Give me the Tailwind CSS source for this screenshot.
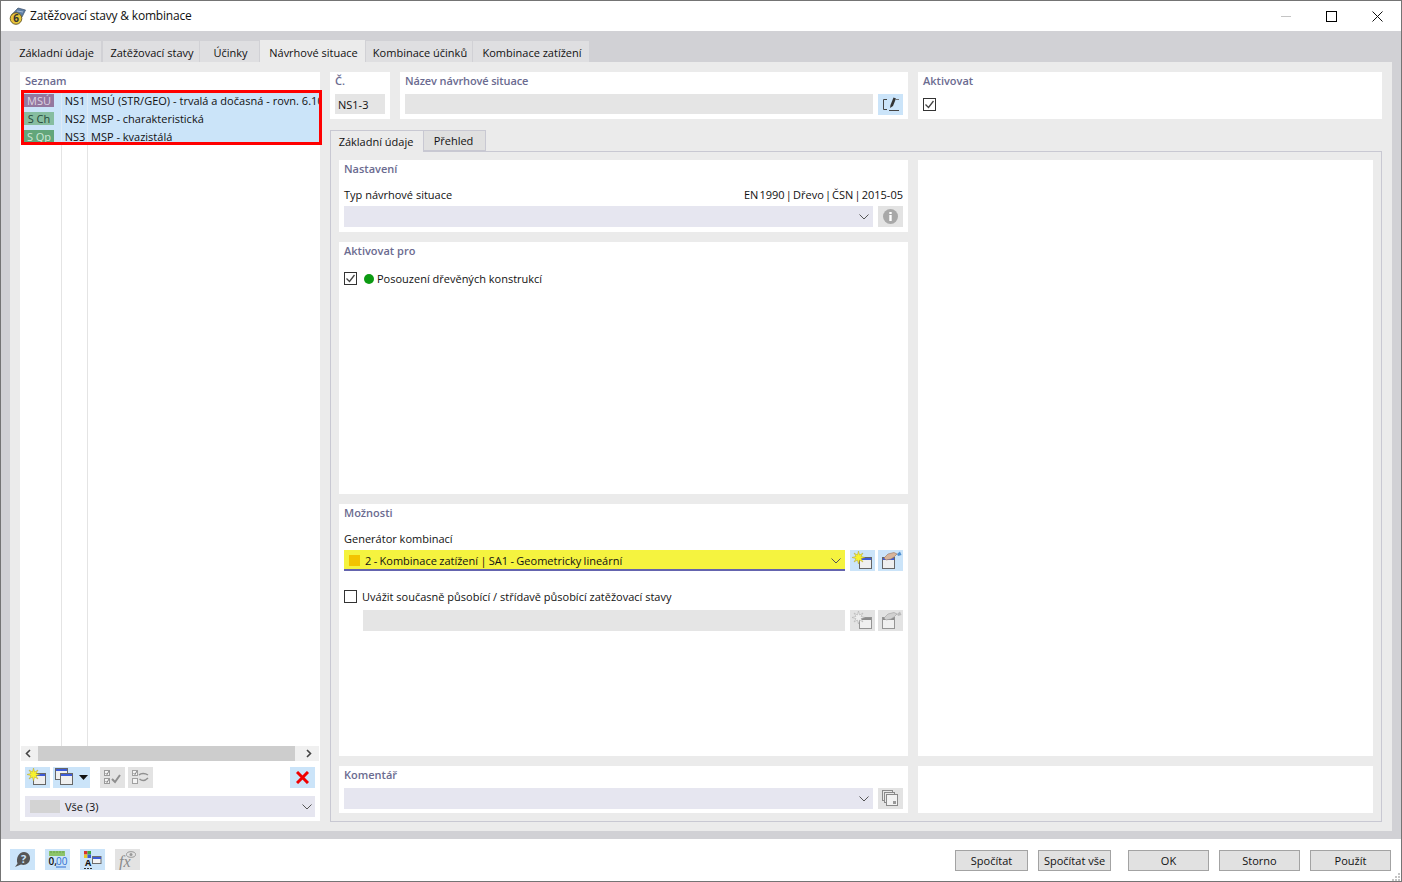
<!DOCTYPE html>
<html lang="cs">
<head>
    <meta charset="UTF-8">
    <title>Zatěžovací stavy &amp; kombinace</title>
    <script src="https://cdn.jsdelivr.net/npm/@tailwindcss/browser@4"></script>
</head>
<body class="bg-white">
    <!-- shared icons -->
    <svg class="hidden" width="0" height="0">
        <defs>
            <symbol id="win" viewBox="0 0 13 12">
                <rect x="0.5" y="0.5" width="12" height="11" fill="#efefef" stroke="#666"/>
                <rect x="1" y="1" width="11" height="2" fill="#3d5bd8"/>
            </symbol>
            <symbol id="win-off" viewBox="0 0 13 12">
                <rect x="0.5" y="0.5" width="12" height="11" fill="#f0f0f0" stroke="#959595"/>
                <rect x="1" y="1" width="11" height="2" fill="#8c8c8c"/>
            </symbol>
            <symbol id="burst" viewBox="0 0 13 13">
                <path d="M6.500 0L7.600 4L11 2L9 5.400L13 6.500L9 7.600L11 11L7.600 9L6.500 13L5.400 9L2 11L4 7.600L0 6.500L4 5.400L2 2L5.400 4z" fill="#f7f22e" stroke="#b9a52a" stroke-width="0.500"/>
            </symbol>
            <symbol id="burst-off" viewBox="0 0 13 13">
                <path d="M6.500 0L7.600 4L11 2L9 5.400L13 6.500L9 7.600L11 11L7.600 9L6.500 13L5.400 9L2 11L4 7.600L0 6.500L4 5.400L2 2L5.400 4z" fill="#eee" stroke="#a8a8a8" stroke-width="0.500"/>
            </symbol>
            <symbol id="chev" viewBox="0 0 10 6">
                <path d="M0.5 0.5L5 5L9.500 0.500" fill="none" stroke="#555" stroke-width="1"/>
            </symbol>
            <symbol id="tick" viewBox="0 0 14 14">
                <rect x="0.5" y="0.5" width="12" height="12" fill="#fff" stroke="#333"/>
                <path d="M2.500 6.500L5.500 9.500L10.500 3" fill="none" stroke="#444" stroke-width="1.300"/>
            </symbol>
        </defs>
    </svg>

    <div class="w-[1402px] h-[882px] flex flex-col border border-[#747474] overflow-hidden font-['Open_Sans','Noto_Sans',sans-serif] text-[11px] text-[#111] leading-none">
        <!-- title bar -->
        <div class="h-[30px] shrink-0 flex items-center bg-white">
            <svg class="ml-[8px] w-[17px] h-[18px]" viewBox="0 0 17 18">
                <path d="M2.500 8L9 1L16.500 3L13 10z" fill="#5f7fa5" stroke="#3c4f68" stroke-width="0.700"/>
                <path d="M8 4L14 5" stroke="#a9bdd6" stroke-width="1"/>
                <circle cx="7" cy="11.500" r="5.800" fill="#e8c53a" stroke="#5e5020" stroke-width="0.900"/>
                <text x="7" y="15" text-anchor="middle" font-size="10" font-weight="700" fill="#333" font-family="Open Sans">6</text>
            </svg>
            <span class="ml-[4px] text-[12px] tracking-[-0.2px]">Zatěžovací stavy &amp; kombinace</span>
            <div class="ml-auto flex items-center">
                <div class="w-[10px] h-px bg-[#c4c4c4] mr-[35px]"></div>
                <div class="w-[11px] h-[11px] border border-black mr-[35px]"></div>
                <svg class="w-[11px] h-[11px] mr-[18px]" viewBox="0 0 11 11"><path d="M0.5 0.5L10.500 10.500M10.500 0.500L0.500 10.500" stroke="#111" stroke-width="1"/></svg>
            </div>
        </div>

        <!-- tabs + main -->
        <div class="flex-1 min-h-0 bg-[#d1d1d5] px-[9px] pt-[9px] pb-[8px] flex flex-col">
            <div class="h-[22px] shrink-0 flex items-stretch gap-px">
                <div class="w-[91px] mt-px pt-px pl-[2px] flex items-center justify-center bg-[#dfdfe1]">Základní údaje</div>
                <div class="w-[96px] mt-px ml-px pt-px pl-[2px] flex items-center justify-center bg-[#dfdfe1]">Zatěžovací stavy</div>
                <div class="w-[59px] mt-px pt-px pl-[2px] flex items-center justify-center bg-[#dfdfe1]">Účinky</div>
                <div class="w-[105px] pt-[2px] pl-[2px] flex items-center justify-center bg-[#ebebeb]">Návrhové situace</div>
                <div class="w-[106px] mt-px pt-px pl-[2px] flex items-center justify-center bg-[#dfdfe1]">Kombinace účinků</div>
                <div class="w-[116px] mt-px pt-px pl-[2px] flex items-center justify-center bg-[#dfdfe1]">Kombinace zatížení</div>
            </div>

            <div class="flex-1 min-h-0 bg-[#ebebeb] p-[10px] flex gap-[10px]">
                <!-- list -->
                <div class="w-[300px] h-[749px] shrink-0 bg-white flex flex-col">
                    <div class="h-[19px] shrink-0 pl-[5px] pt-[3px] font-semibold text-[#6b6b90]">Seznam</div>
                    <div class="relative flex-1 min-h-0 flex flex-col">
                        <div class="absolute left-px -right-[2px] -top-px h-[55px] border-[3px] border-[#ff0000] z-10"></div>
                        <div class="h-[18px] shrink-0 ml-[2px] flex items-center bg-[#cbe4f9] overflow-hidden whitespace-nowrap">
                            <div class="w-[40px] h-full shrink-0 border-r border-[#dfeaf5] flex items-center pl-[2px]"><span class="w-[30px] h-[13px] flex items-center justify-center bg-[#94789f] text-[#ddd5e4]">MSÚ</span></div>
                            <div class="w-[26px] h-full shrink-0 border-r border-[#dfeaf5] pl-px flex items-center justify-center">NS1</div>
                            <div class="pl-[3px] tracking-[0.02px]">MSÚ (STR/GEO) - trvalá a dočasná - rovn. 6.10</div>
                        </div>
                        <div class="h-[18px] shrink-0 ml-[2px] flex items-center bg-[#cbe4f9] overflow-hidden whitespace-nowrap">
                            <div class="w-[40px] h-full shrink-0 border-r border-[#dfeaf5] flex items-center pl-[2px]"><span class="w-[30px] h-[13px] flex items-center justify-center bg-[#86bda0] text-[#24483a]">S Ch</span></div>
                            <div class="w-[26px] h-full shrink-0 border-r border-[#dfeaf5] pl-px flex items-center justify-center">NS2</div>
                            <div class="pl-[3px]">MSP - charakteristická</div>
                        </div>
                        <div class="h-[18px] shrink-0 ml-[2px] flex items-center bg-[#cbe4f9] overflow-hidden whitespace-nowrap">
                            <div class="w-[40px] h-full shrink-0 border-r border-[#dfeaf5] flex items-center pl-[2px]"><span class="w-[30px] h-[13px] flex items-center justify-center bg-[#62a67a] text-[#cfe8d8]">S Qp</span></div>
                            <div class="w-[26px] h-full shrink-0 border-r border-[#dfeaf5] pl-px flex items-center justify-center">NS3</div>
                            <div class="pl-[3px]">MSP - kvazistálá</div>
                        </div>
                        <div class="flex-1 ml-[2px] flex">
                            <div class="w-[40px] border-r border-[#e4e4e4]"></div>
                            <div class="w-[26px] border-r border-[#e4e4e4]"></div>
                        </div>
                    </div>
                    <!-- scrollbar -->
                    <div class="h-[15px] shrink-0 mx-px flex items-center bg-[#f0f0f0]">
                        <svg class="w-[17px] h-[9px]" viewBox="0 0 17 9"><path d="M9 1L5.500 4.500L9 8" fill="none" stroke="#444" stroke-width="1.600"/></svg>
                        <div class="w-[257px] h-full bg-[#cdcdcd]"></div>
                        <svg class="w-[23px] h-[9px]" viewBox="0 0 23 9"><path d="M12 1L15.500 4.500L12 8" fill="none" stroke="#444" stroke-width="1.600"/></svg>
                    </div>
                    <!-- toolbar -->
                    <div class="h-[21px] mt-[6px] mx-[5px] shrink-0 flex">
                        <div class="relative w-[25px] h-[21px] bg-[#cbe4f9]">
                            <svg class="absolute left-[8px] top-[6px] w-[13px] h-[12px]"><use href="#win"/></svg>
                            <svg class="absolute left-[2px] top-px w-[13px] h-[13px]"><use href="#burst"/></svg>
                        </div>
                        <div class="relative w-[37px] h-[21px] ml-[3px] bg-[#cbe4f9]">
                            <svg class="absolute left-[2px] top-px w-[13px] h-[12px]"><use href="#win"/></svg>
                            <svg class="absolute left-[7px] top-[6px] w-[13px] h-[12px]"><use href="#win"/></svg>
                            <svg class="absolute left-[26px] top-[8px] w-[9px] h-[5px]" viewBox="0 0 9 5"><path d="M0 0H9L4.500 5z" fill="#111"/></svg>
                        </div>
                        <div class="w-[25px] h-[21px] ml-[10px] bg-[#e3e3e3]">
                            <svg class="w-[25px] h-[21px]" viewBox="0 0 25 21"><g fill="#f4f4f4" stroke="#9a9a9a"><rect x="4.500" y="3.500" width="5" height="5"/><rect x="4.500" y="11.500" width="5" height="5"/></g><path d="M5.500 6L7 7.500L9 4M5.500 14L7 15.500L9 12" fill="none" stroke="#808080"/><path d="M12 12L15 15L20 8" fill="none" stroke="#8e8e8e" stroke-width="2"/></svg>
                        </div>
                        <div class="w-[25px] h-[21px] ml-[3px] bg-[#e3e3e3]">
                            <svg class="w-[25px] h-[21px]" viewBox="0 0 25 21"><g fill="#f4f4f4" stroke="#a0a0a0"><rect x="4.500" y="3.500" width="5" height="5"/><rect x="4.500" y="11.500" width="5" height="5"/></g><path d="M5.500 6L7 7.500L9 4" fill="none" stroke="#808080"/><path d="M11 8C13 6 17 6 20 8M20 11C17 14 14 14 11.500 12" fill="none" stroke="#909090" stroke-width="1.500"/></svg>
                        </div>
                        <div class="ml-auto w-[25px] h-[21px] bg-[#cbe4f9] flex items-center justify-center">
                            <svg class="w-[13px] h-[13px]" viewBox="0 0 13 13"><path d="M1 1L12 12M12 1L1 12" stroke="#f00000" stroke-width="3"/></svg>
                        </div>
                    </div>
                    <!-- filter -->
                    <div class="h-[21px] mt-[8px] mx-[5px] mb-[4px] shrink-0 flex items-center bg-[#e6e6f0]">
                        <div class="w-[30px] h-[13px] ml-[5px] bg-[#d3d3d3]"></div>
                        <span class="ml-[5px]">Vše (3)</span>
                        <svg class="ml-auto mr-[3px] w-[10px] h-[6px]"><use href="#chev"/></svg>
                    </div>
                </div>

                <!-- right side -->
                <div class="w-[1052px] h-[750px] shrink-0 flex flex-col">
                    <div class="h-[47px] shrink-0 flex gap-[10px]">
                        <div class="w-[60px] bg-white px-[5px] pt-[3px]">
                            <div class="h-[19px] font-semibold text-[#6b6b90]">Č.</div>
                            <div class="h-[20px] bg-[#e5e5e5] flex items-center pl-[3px]">NS1-3</div>
                        </div>
                        <div class="w-[508px] bg-white px-[5px] pt-[3px]">
                            <div class="h-[19px] font-semibold text-[#6b6b90] tracking-[-0.13px]">Název návrhové situace</div>
                            <div class="flex gap-[5px]">
                                <div class="flex-1 h-[20px] bg-[#e5e5e5]"></div>
                                <div class="w-[25px] h-[21px] bg-[#cbe4f9]">
                                    <svg class="w-[25px] h-[21px]" viewBox="0 0 25 21"><path d="M9 5.500H5.500V15.500H9M11 16.500H21" fill="none" stroke="#444" stroke-width="1"/><path d="M12 14L12.500 11L15.500 3.500L18 4.500L15 12z" fill="#333"/><path d="M18 5.500H21" stroke="#777"/></svg>
                                </div>
                            </div>
                        </div>
                        <div class="w-[464px] bg-white px-[5px] pt-[3px]">
                            <div class="h-[19px] font-semibold text-[#6b6b90]">Aktivovat</div>
                            <svg class="mt-[4px] w-[14px] h-[14px]"><use href="#tick"/></svg>
                        </div>
                    </div>

                    <!-- inner tabs -->
                    <div class="h-[22px] mt-[11px] shrink-0 flex relative z-10">
                        <div class="w-[94px] h-[22px] pr-[2px] flex items-center justify-center bg-[#ebebeb] border border-b-0 border-[#c8c8d2]">Základní údaje</div>
                        <div class="w-[62px] h-[21px] pr-[2px] flex items-center justify-center bg-[#e0e0e0] border border-l-0 border-[#c8c8d2]">Přehled</div>
                    </div>

                    <div class="h-[671px] -mt-px shrink-0 border border-[#c8c8d2] p-[8px] grid grid-cols-[569px_455px] grid-rows-[72px_252px_252px_47px] gap-[10px]">
                        <!-- Nastavení -->
                        <div class="bg-white px-[5px] flex flex-col">
                            <div class="h-[18px] pt-[3px] font-semibold text-[#6b6b90]">Nastavení</div>
                            <div class="h-[28px] flex items-end justify-between pb-[6px]">
                                <span>Typ návrhové situace</span>
                                <span class="[word-spacing:-1.7px]">EN 1990 | Dřevo | ČSN | 2015-05</span>
                            </div>
                            <div class="flex gap-[5px]">
                                <div class="flex-1 h-[21px] bg-[#e6e6f0] flex items-center justify-end pr-[4px]"><svg class="w-[10px] h-[6px]"><use href="#chev"/></svg></div>
                                <div class="w-[25px] h-[21px] bg-[#e3e3e3] flex items-center justify-center">
                                    <svg class="w-[15px] h-[15px]" viewBox="0 0 15 15"><circle cx="7.500" cy="7.500" r="7.500" fill="#a8a8a8"/><rect x="6.300" y="6" width="2.400" height="6" fill="#fff"/><rect x="6.300" y="3" width="2.400" height="2" fill="#fff"/></svg>
                                </div>
                            </div>
                        </div>
                        <div class="row-span-3 bg-white"></div>

                        <!-- Aktivovat pro -->
                        <div class="bg-white px-[5px]">
                            <div class="h-[18px] pt-[3px] font-semibold text-[#6b6b90]">Aktivovat pro</div>
                            <div class="mt-[11px] flex items-center">
                                <svg class="mt-px w-[14px] h-[14px]"><use href="#tick"/></svg>
                                <span class="ml-[6px] w-[10px] h-[10px] rounded-full bg-[#0c9a12]"></span>
                                <span class="ml-[3px]">Posouzení dřevěných konstrukcí</span>
                            </div>
                        </div>

                        <!-- Možnosti -->
                        <div class="bg-white px-[5px]">
                            <div class="h-[18px] pt-[3px] font-semibold text-[#6b6b90]">Možnosti</div>
                            <div class="h-[28px] flex items-end pb-[6px]">Generátor kombinací</div>
                            <div class="flex">
                                <div class="w-[501px] h-[21px] pt-[2px] bg-[#f5f33f] border-b-2 border-[#6464ae] flex items-center">
                                    <span class="ml-[5px] w-[11px] h-[11px] bg-[#f3c300]"></span>
                                    <span class="ml-[5px] [word-spacing:-0.5px]">2 - Kombinace zatížení | SA1 - Geometricky lineární</span>
                                    <svg class="ml-auto mr-[4px] w-[10px] h-[6px]"><use href="#chev"/></svg>
                                </div>
                                <div class="relative w-[25px] h-[21px] ml-[5px] bg-[#cbe4f9]">
                                    <svg class="absolute left-[9px] top-[7px] w-[13px] h-[12px]"><use href="#win"/></svg>
                                    <svg class="absolute left-[2px] top-px w-[13px] h-[13px]"><use href="#burst"/></svg>
                                </div>
                                <div class="relative w-[25px] h-[21px] ml-[3px] bg-[#cbe4f9]">
                                    <svg class="absolute left-[4px] top-[7px] w-[13px] h-[12px]"><use href="#win"/></svg>
                                    <svg class="absolute left-[5px] top-px w-[19px] h-[10px]" viewBox="0 0 19 10"><path d="M1 7L5 3L11 1.500L14 3L11 6L8 8L3 9z" fill="#d8b49a" stroke="#9a7560" stroke-width="0.600"/><path d="M14 3L17 0.500L18.500 4L15 5z" fill="#4f8fd0"/></svg>
                                </div>
                            </div>
                            <div class="mt-[19px] flex items-center">
                                <span class="w-[13px] h-[13px] border border-[#333] bg-white"></span>
                                <span class="ml-[5px]">Uvážit současně působící / střídavě působící zatěžovací stavy</span>
                            </div>
                            <div class="mt-[7px] flex pl-[19px]">
                                <div class="w-[482px] h-[21px] bg-[#e5e5e5]"></div>
                                <div class="relative w-[25px] h-[21px] ml-[5px] bg-[#e3e3e3]">
                                    <svg class="absolute left-[9px] top-[7px] w-[13px] h-[12px]"><use href="#win-off"/></svg>
                                    <svg class="absolute left-[2px] top-px w-[13px] h-[13px]"><use href="#burst-off"/></svg>
                                </div>
                                <div class="relative w-[25px] h-[21px] ml-[3px] bg-[#e3e3e3]">
                                    <svg class="absolute left-[4px] top-[7px] w-[13px] h-[12px]"><use href="#win-off"/></svg>
                                    <svg class="absolute left-[5px] top-px w-[19px] h-[10px]" viewBox="0 0 19 10"><path d="M1 7L5 3L11 1.500L14 3L11 6L8 8L3 9z" fill="#d0d0d0" stroke="#a0a0a0" stroke-width="0.600"/><path d="M14 3L17 0.500L18.500 4L15 5z" fill="#bbb"/></svg>
                                </div>
                            </div>
                        </div>

                        <!-- Komentář -->
                        <div class="bg-white px-[5px]">
                            <div class="h-[22px] pt-[3px] font-semibold text-[#6b6b90]">Komentář</div>
                            <div class="flex gap-[5px]">
                                <div class="flex-1 h-[21px] bg-[#e6e6f0] flex items-center justify-end pr-[4px]"><svg class="w-[10px] h-[6px]"><use href="#chev"/></svg></div>
                                <div class="w-[25px] h-[21px] bg-[#e3e3e3]">
                                    <svg class="w-[25px] h-[21px]" viewBox="0 0 25 21"><g fill="#e8e8e8" stroke="#8a8a8a"><rect x="4.500" y="2.500" width="10" height="10"/><rect x="6.500" y="4.500" width="10" height="10"/><rect x="8.500" y="6.500" width="11" height="11" fill="#f2f2f2"/></g><rect x="15" y="13" width="3" height="3" fill="#999"/></svg>
                                </div>
                            </div>
                        </div>
                        <div class="bg-white"></div>
                    </div>
                </div>
            </div>
        </div>

        <!-- footer -->
        <div class="relative h-[42px] shrink-0 bg-white flex items-center pl-[9px]">
            <div class="w-[25px] h-[21px] -mt-[1px] bg-[#cbe4f9]">
                <svg class="w-[25px] h-[21px]" viewBox="0 0 25 21"><path d="M5 18L7.500 14.500C5.500 9 9 3 14 3C18.500 3 20.500 7 20 10C19.500 14.500 15 17 11 15.500z" fill="#555"/><text x="13.500" y="13.500" text-anchor="middle" font-size="11" font-weight="700" fill="#cbe4f9" font-family="Open Sans">?</text></svg>
            </div>
            <div class="w-[25px] h-[21px] -mt-[1px] ml-[10px] bg-[#cbe4f9]">
                <svg class="w-[25px] h-[21px]" viewBox="0 0 25 21"><rect x="4" y="2" width="16" height="5" fill="#8cc46a"/><path d="M6 2v2M9 2v2M12 2v2M15 2v2M18 2v2" stroke="#5f9a44" stroke-width="0.800"/><text x="3.500" y="16" font-size="10" font-weight="600" fill="#111" font-family="Open Sans">0,</text><text x="11" y="16" font-size="10" fill="#2f6fd0" font-family="Open Sans">00</text><path d="M11 18H21" stroke="#2f6fd0"/></svg>
            </div>
            <div class="w-[25px] h-[21px] -mt-[1px] ml-[10px] bg-[#cbe4f9]">
                <svg class="w-[25px] h-[21px]" viewBox="0 0 25 21"><rect x="4" y="2" width="3.500" height="3.500" fill="#d83030"/><rect x="7.500" y="2" width="3.500" height="3.500" fill="#3ea53e"/><rect x="4" y="5.500" width="3.500" height="3.500" fill="#e8c82a"/><rect x="7.500" y="5.500" width="3.500" height="3.500" fill="#3a5fd0"/><text x="8" y="17" text-anchor="middle" font-size="9" font-weight="700" fill="#111" font-family="Open Sans">A</text><path d="M4 19.500h2M7 19.500h2M10 19.500h2" stroke="#333"/><rect x="12.500" y="7.500" width="8.500" height="7" fill="#f4f4f4" stroke="#6e6e6e"/><rect x="13" y="8" width="8" height="2" fill="#3d5bd8"/></svg>
            </div>
            <div class="w-[25px] h-[21px] -mt-[1px] ml-[10px] bg-[#e3e3e3]">
                <svg class="w-[25px] h-[21px]" viewBox="0 0 25 21"><text x="4" y="18" font-size="16" font-style="italic" fill="#8a8a8a" font-family="Liberation Serif">fx</text><ellipse cx="16" cy="5.500" rx="4.500" ry="2.800" fill="none" stroke="#999"/><circle cx="16" cy="5.500" r="1.500" fill="#999"/></svg>
            </div>

            <div class="ml-auto mr-[10px] flex mt-px">
                <div class="w-[73px] h-[21px] border border-[#a3a3a3] bg-[#e1e1e1] flex items-center justify-center">Spočítat</div>
                <div class="w-[73px] h-[21px] ml-[10px] border border-[#a3a3a3] bg-[#e1e1e1] flex items-center justify-center">Spočítat vše</div>
                <div class="w-[81px] h-[21px] ml-[17px] border border-[#a3a3a3] bg-[#e1e1e1] flex items-center justify-center">OK</div>
                <div class="w-[81px] h-[21px] ml-[10px] border border-[#a3a3a3] bg-[#e1e1e1] flex items-center justify-center">Storno</div>
                <div class="w-[81px] h-[21px] ml-[10px] border border-[#a3a3a3] bg-[#e1e1e1] flex items-center justify-center">Použít</div>
            </div>
            <svg class="absolute right-0 bottom-0 w-[9px] h-[8px]" viewBox="0 0 9 8"><path d="M6 0h2v2h-2zM3 3h2v2h-2zM6 3h2v2h-2zM0 6h2v2h-2zM3 6h2v2h-2zM6 6h2v2h-2z" fill="#c4c4c4"/></svg>
        </div>
    </div>
</body>
</html>
